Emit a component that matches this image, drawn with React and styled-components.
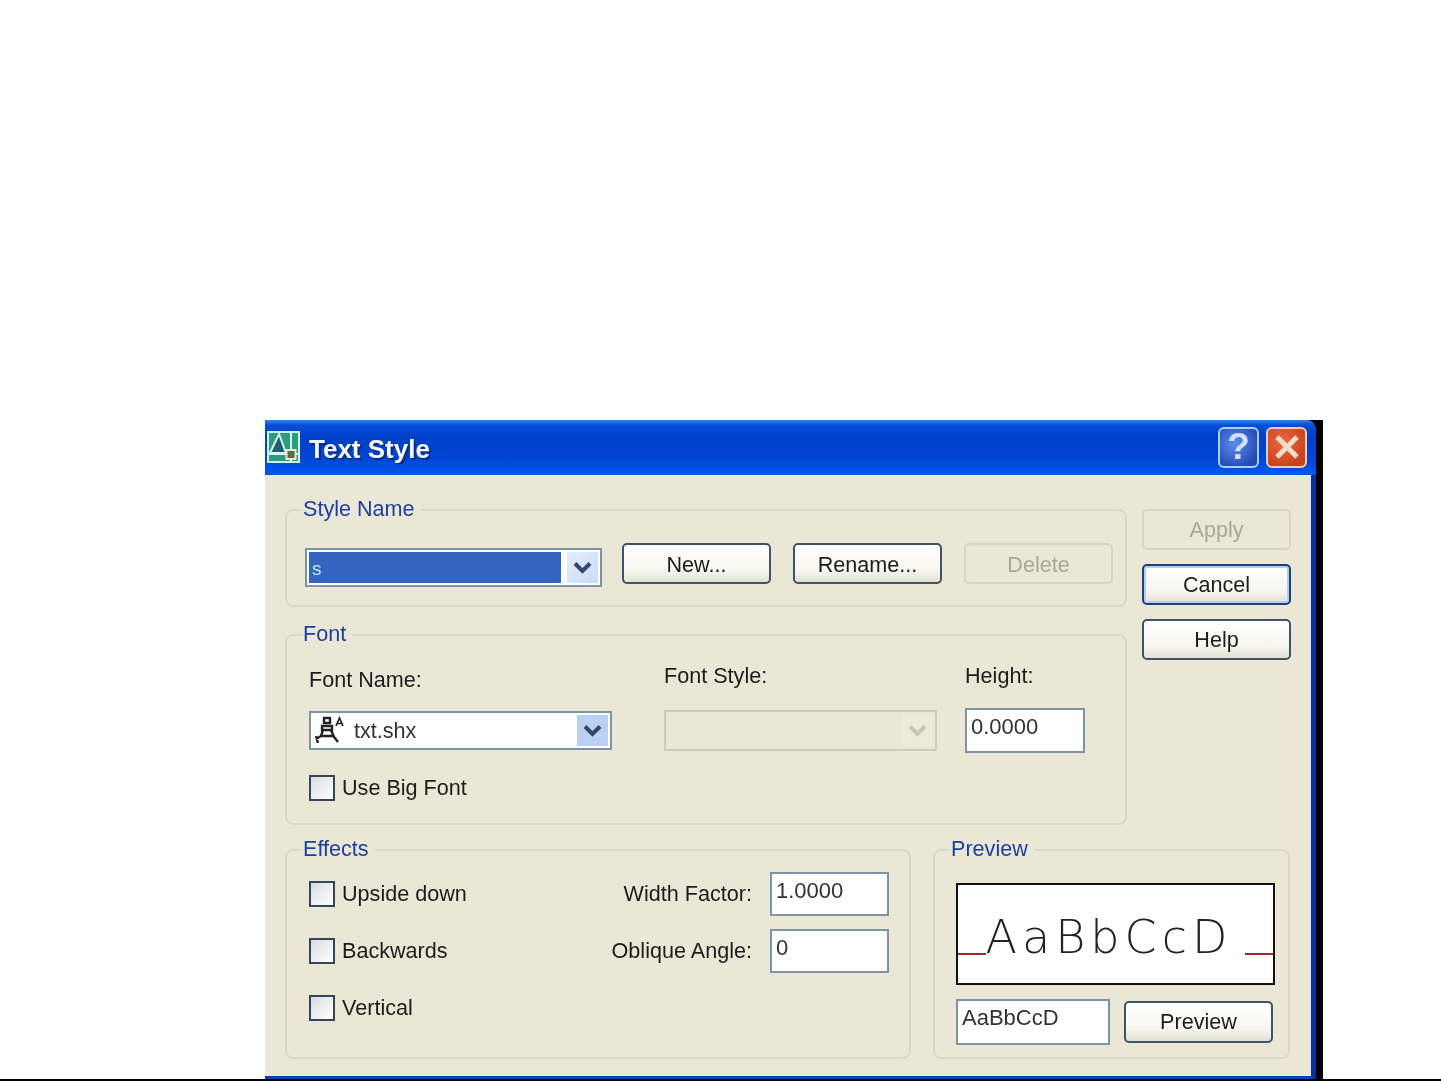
import React from 'react';
import styled, { createGlobalStyle } from 'styled-components';

const GlobalStyle = createGlobalStyle`
  html, body {
    margin: 0;
    background: #fff;
    overflow: hidden;
  }
`;

const Page = styled.div`
  box-sizing: border-box;
  height: 1081px;
  padding: 420px 118px 0 265px;
  background: #fff;
  border-bottom: 2px solid #000;
  font-family: "Liberation Sans", Arial, sans-serif;
  font-size: 21.6px;
  color: #1c1c1c;
`;

const Window = styled.div`
  height: 659px;
  background: #000;
  padding-right: 7px;
  display: flex;
  flex-direction: column;
  filter: blur(0.6px);
`;

const TitleBar = styled.div`
  height: 55px;
  flex: none;
  display: flex;
  align-items: center;
  gap: 9px;
  padding: 0 9px 0 2px;
  border-top-right-radius: 9px;
  background: linear-gradient(180deg, #2f86ee 0, #0a4fd8 9%, #0040c8 30%, #0046d6 70%, #0058ee 100%);
`;

const Title = styled.div`
  flex: 1;
  padding-top: 3px;
  color: #f4f8ff;
  font-weight: 700;
  font-size: 26px;
  text-shadow: 2px 2px 1px #0b2a80;
`;

const CaptionButton = styled.div`
  box-sizing: border-box;
  width: 41px;
  height: 41px;
  border: 2px solid ${p => (p.$close ? '#f0cbb8' : '#a6d2f2')};
  border-radius: 6px;
  display: flex;
  align-items: center;
  justify-content: center;
  margin-left: -2px;
  margin-top: -1px;
  color: #cfe0ff;
  font-weight: 700;
  font-size: 37px;
  background: ${p => (p.$close
    ? 'radial-gradient(circle at 40% 35%, #ea6a3e, #c8401c 80%)'
    : 'radial-gradient(circle at 40% 40%, #5f8cea, #2148b6 80%)')};
`;

const Body = styled.div`
  flex: 1;
  min-height: 0;
  box-sizing: border-box;
  background: #ebe7d6;
  border-right: 5px solid #0a2ea0;
  border-bottom: 3px solid #0a3ec0;
  padding: 34px 21px 0 20px;
`;

const TopArea = styled.div`
  display: flex;
  gap: 15px;
`;

const LeftColumn = styled.div`
  flex: none;
  width: 842px;
  display: flex;
  flex-direction: column;
  gap: 27px;
`;

const Group = styled.div`
  position: relative;
  box-sizing: border-box;
  border: 2px solid #dcd8c6;
  border-radius: 8px;
`;

const Legend = styled.span`
  position: absolute;
  left: 16px;
  top: -15px;
  padding-right: 6px;
  background: #ebe7d6;
  color: #1d3fa0;
  line-height: 26px;
`;

const StyleGroup = styled(Group)`
  height: 98px;
  display: flex;
  align-items: flex-start;
  padding: 32px 0 0 18px;
`;

const StyleButtons = styled.div`
  display: flex;
  gap: 22px;
  margin-left: 20px;
`;

const FontGroup = styled(Group)`
  height: 191px;
  padding: 0 0 0 22px;
  display: grid;
  grid-template-columns: 355px 301px 120px;
  grid-template-rows: 72px 45px 1fr;
`;

const FieldLabel = styled.div`
  align-self: end;
  line-height: 26px;
  margin-bottom: ${p => (p.$low ? '15px' : '19px')};
`;

const FieldCell = styled.div`
  display: flex;
  align-items: center;
`;

const BigFontRow = styled.div`
  grid-column: 1 / 4;
  display: flex;
  align-items: center;
`;

const Combo = styled.div`
  box-sizing: border-box;
  width: ${p => p.$width}px;
  height: ${p => p.$height || 39}px;
  border: 2px solid ${p => (p.$disabled ? '#d0ccba' : '#7f93a8')};
  background: ${p => (p.$disabled ? '#ebe7d6' : '#fff')};
  display: flex;
  align-items: center;
  padding: 2px;
  gap: 6px;
`;

const StyleCombo = styled(Combo)`
  margin-top: 5px;
`;

const ComboValue = styled.div`
  flex: 1;
  align-self: stretch;
  display: flex;
  align-items: center;
  padding: ${p => (p.$selected ? '3px 0 0 3px' : '0 0 0 2px')};
  font-size: ${p => (p.$selected ? '19px' : '21.6px')};
  color: ${p => (p.$selected ? '#cfe6ff' : '#333')};
  background: ${p => (p.$selected ? '#3366c0' : 'transparent')};
  gap: 9px;
`;

const ComboArrow = styled.div`
  flex: none;
  width: 31px;
  align-self: stretch;
  display: flex;
  align-items: center;
  justify-content: center;
  background: ${p => (p.$disabled
    ? '#eeebdd'
    : p.$flat
      ? '#bcd0f4'
      : 'linear-gradient(135deg, #e6edfa, #c8dcf8)')};
  color: ${p => (p.$disabled ? '#c9c6b8' : '#33476e')};
`;

const PushButton = styled.div`
  box-sizing: border-box;
  flex: none;
  width: ${p => p.$width || 149}px;
  height: ${p => p.$height || 41}px;
  border-radius: 5px;
  display: flex;
  align-items: center;
  justify-content: center;
  border: 2px solid ${p => (p.$disabled ? '#d8d4c2' : p.$default ? '#1f3f78' : '#3f5268')};
  color: ${p => (p.$disabled ? '#a9a79b' : '#1c1c1c')};
  background: ${p => (p.$disabled
    ? '#ebe7d6'
    : 'linear-gradient(180deg, #fff 0, #f6f5ee 70%, #e2e0d2 100%)')};
  box-shadow: ${p => (p.$default ? 'inset 0 0 0 2px #b4cdf2' : 'none')};
`;

const StyleButton = styled(PushButton)`
  padding-top: 3px;
`;

const ButtonColumn = styled.div`
  flex: none;
  width: 149px;
  display: flex;
  flex-direction: column;
  gap: 14px;
`;

const TextBox = styled.div`
  box-sizing: border-box;
  flex: none;
  width: ${p => p.$width}px;
  height: ${p => p.$height}px;
  border: 2px solid #7f93a8;
  background: #fff;
  padding: 0 4px;
  font-size: 22px;
  line-height: 33px;
  color: #333;
`;

const CheckRow = styled.div`
  display: flex;
  align-items: center;
  gap: 7px;
  height: 26px;
`;

const CheckBox = styled.div`
  box-sizing: border-box;
  width: 26px;
  height: 26px;
  border: 2px solid #33475a;
  background: linear-gradient(135deg, #d8dde0, #fff);
`;

const BottomArea = styled.div`
  display: flex;
  gap: 22px;
  margin-top: 24px;
`;

const EffectsGroup = styled(Group)`
  flex: none;
  width: 626px;
  height: 210px;
  padding: 21px 20px 0 22px;
  display: flex;
  justify-content: space-between;
`;

const CheckColumn = styled.div`
  display: flex;
  flex-direction: column;
  gap: 31px;
  padding-top: 9px;
`;

const FactorColumn = styled.div`
  display: grid;
  grid-template-columns: auto 119px;
  column-gap: 18px;
  row-gap: 13px;
  align-items: center;
  justify-items: end;
  align-self: flex-start;
`;

const PreviewGroup = styled(Group)`
  flex: none;
  width: 357px;
  height: 210px;
  padding: 32px 13px 0 21px;
`;

const PreviewBox = styled.div`
  box-sizing: border-box;
  height: 102px;
  border: 2px solid #111;
  background: #fff;
  display: flex;
  align-items: center;
  padding-top: 6px;
`;

const RedLine = styled.div`
  flex: 1;
  height: 2px;
  margin-top: 34px;
  background: #9c2a2a;
`;

const PreviewText = styled.div`
  font-family: "DejaVu Sans", sans-serif;
  font-weight: 200;
  font-size: 46px;
  letter-spacing: 5px;
  margin-right: 13px;
  color: #222;
  line-height: 60px;
`;

const PreviewControls = styled.div`
  display: flex;
  align-items: center;
  justify-content: space-between;
  margin-top: 14px;
  padding-right: 2px;
`;

function Chevron() {
  return (
    <svg width="19" height="13" viewBox="0 0 19 13" fill="none" stroke="currentColor" strokeWidth="4">
      <path d="M2 2.5 L9.5 10 L17 2.5" />
    </svg>
  );
}

function AppIcon() {
  return (
    <svg width="33" height="33" viewBox="0 0 33 33">
      <rect x="1" y="1" width="31" height="30" fill="#2b9c80" stroke="#cdf2e8" strokeWidth="2" />
      <path d="M3 22 L12 3 L19 22 Z" fill="#1f5f70" stroke="#d8f8ec" strokeWidth="2" />
      <path d="M24 2 V30 M2 23 H31" stroke="#d8f8ec" strokeWidth="2" />
      <rect x="19.5" y="19" width="9" height="9" fill="#5a6a50" stroke="#eee6cc" strokeWidth="2" />
    </svg>
  );
}

function FontIcon() {
  return (
    <svg width="30" height="29" viewBox="0 0 30 29" fill="none" stroke="#222" strokeWidth="2.4">
      <rect x="9" y="2" width="6" height="5" />
      <path d="M7 10 H17 V14 H7 Z M8 14 L6 20 L1 23 M16 14 L19 21 L23 26 M1 20 L3 27 M6 20 H19" />
      <path d="M21 10 L24.5 2 L28 10 M22 7.5 H27" strokeWidth="1.7" />
    </svg>
  );
}

function App() {
  return (
    <Page>
      <GlobalStyle />
      <Window>
        <TitleBar>
          <AppIcon />
          <Title>Text Style</Title>
          <CaptionButton>?</CaptionButton>
          <CaptionButton $close>
            <svg width="26" height="26" viewBox="0 0 26 26" stroke="#f6ddcc" strokeWidth="5">
              <path d="M3 3 L23 23 M23 3 L3 23" />
            </svg>
          </CaptionButton>
        </TitleBar>
        <Body>
          <TopArea>
            <LeftColumn>
              <StyleGroup>
                <Legend>Style Name</Legend>
                <StyleCombo $width={297}>
                  <ComboValue $selected>s</ComboValue>
                  <ComboArrow><Chevron /></ComboArrow>
                </StyleCombo>
                <StyleButtons>
                  <StyleButton>New...</StyleButton>
                  <StyleButton>Rename...</StyleButton>
                  <StyleButton $disabled>Delete</StyleButton>
                </StyleButtons>
              </StyleGroup>
              <FontGroup>
                <Legend>Font</Legend>
                <FieldLabel $low>Font Name:</FieldLabel>
                <FieldLabel>Font Style:</FieldLabel>
                <FieldLabel>Height:</FieldLabel>
                <FieldCell>
                  <Combo $width={303}>
                    <ComboValue><FontIcon />txt.shx</ComboValue>
                    <ComboArrow $flat><Chevron /></ComboArrow>
                  </Combo>
                </FieldCell>
                <FieldCell>
                  <Combo $width={273} $height={41} $disabled>
                    <ComboValue />
                    <ComboArrow $disabled><Chevron /></ComboArrow>
                  </Combo>
                </FieldCell>
                <FieldCell>
                  <TextBox $width={120} $height={45}>0.0000</TextBox>
                </FieldCell>
                <BigFontRow>
                  <CheckRow>
                    <CheckBox />
                    Use Big Font
                  </CheckRow>
                </BigFontRow>
              </FontGroup>
            </LeftColumn>
            <ButtonColumn>
              <PushButton $disabled>Apply</PushButton>
              <PushButton $default>Cancel</PushButton>
              <PushButton>Help</PushButton>
            </ButtonColumn>
          </TopArea>
          <BottomArea>
            <EffectsGroup>
              <Legend>Effects</Legend>
              <CheckColumn>
                <CheckRow><CheckBox />Upside down</CheckRow>
                <CheckRow><CheckBox />Backwards</CheckRow>
                <CheckRow><CheckBox />Vertical</CheckRow>
              </CheckColumn>
              <FactorColumn>
                <span>Width Factor:</span>
                <TextBox $width={119} $height={44}>1.0000</TextBox>
                <span>Oblique Angle:</span>
                <TextBox $width={119} $height={44}>0</TextBox>
              </FactorColumn>
            </EffectsGroup>
            <PreviewGroup>
              <Legend>Preview</Legend>
              <PreviewBox>
                <RedLine />
                <PreviewText>AaBbCcD</PreviewText>
                <RedLine />
              </PreviewBox>
              <PreviewControls>
                <TextBox $width={154} $height={46}>AaBbCcD</TextBox>
                <PushButton $width={149} $height={42}>Preview</PushButton>
              </PreviewControls>
            </PreviewGroup>
          </BottomArea>
        </Body>
      </Window>
    </Page>
  );
}

export default App;
